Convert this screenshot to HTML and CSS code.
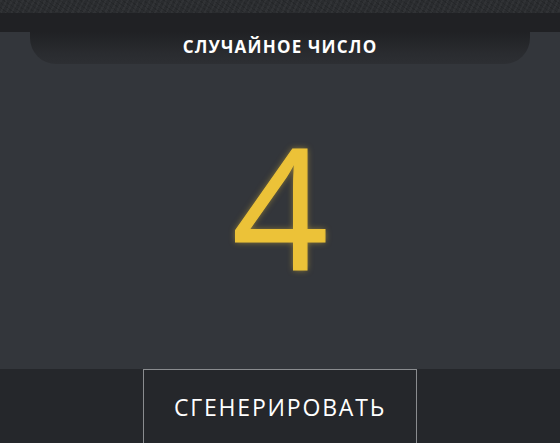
FILE: index.html
```html
<!DOCTYPE html>
<html lang="ru">
<head>
  <meta charset="UTF-8">
  <meta name="viewport" content="width=device-width, initial-scale=1.0">
  <title>Случайное число</title>
  <link rel="stylesheet" href="styles.css">
</head>
<body>
  <div class="texture"></div>
  <div class="topbar"></div>
  <div class="main">
    <div class="tab">Случайное число</div>
    <div class="number" id="number">4</div>
  </div>
  <div class="footer">
    <button class="generate" id="generate">Сгенерировать</button>
  </div>
</body>
</html>
```

FILE: styles.css
```css
html, body {
  height: 100%;
}
body {
  margin: 0;
  font-family: "Open Sans", "Noto Sans", sans-serif;
  background: #33363b;
  color: white;
  display: flex;
  flex-direction: column;
  overflow: hidden;
}
.texture {
  height: 13px;
  background-color: #2a2c2f;
  background-image:
    repeating-linear-gradient(115deg, rgba(255,255,255,0.03) 0 2px, transparent 2px 5px),
    repeating-linear-gradient(35deg, rgba(0,0,0,0.12) 0 1px, transparent 1px 4px);
}
.topbar {
  height: 19px;
  background: #202124;
}
.main {
  flex: 1;
  display: flex;
  flex-direction: column;
  align-items: center;
}
.tab {
  width: 500px;
  height: 32px;
  box-sizing: border-box;
  padding-top: 3px;
  background: linear-gradient(#202124, #2a2c30 70%, #2d2f33);
  border-radius: 0 0 26px 26px;
  text-align: center;
  text-transform: uppercase;
  font-weight: 700;
  font-size: 17px;
  letter-spacing: 1.2px;
}
.number {
  margin-top: 43px;
  font-size: 168px;
  line-height: 196px;
  font-weight: 400;
  color: #ecc238;
  -webkit-text-stroke: 1.2px #ecc238;
  text-shadow: 0 0 6px rgba(236, 194, 56, 0.55);
}
.footer {
  height: 74px;
  background: #25272b;
  display: flex;
  justify-content: center;
}
.generate {
  width: 274px;
  height: 76px;
  background: #25272b;
  border: 1px solid #8a8c8f;
  color: white;
  font-family: inherit;
  font-size: 23px;
  font-weight: 400;
  letter-spacing: 1.8px;
  text-transform: uppercase;
  padding: 0;
}
```
